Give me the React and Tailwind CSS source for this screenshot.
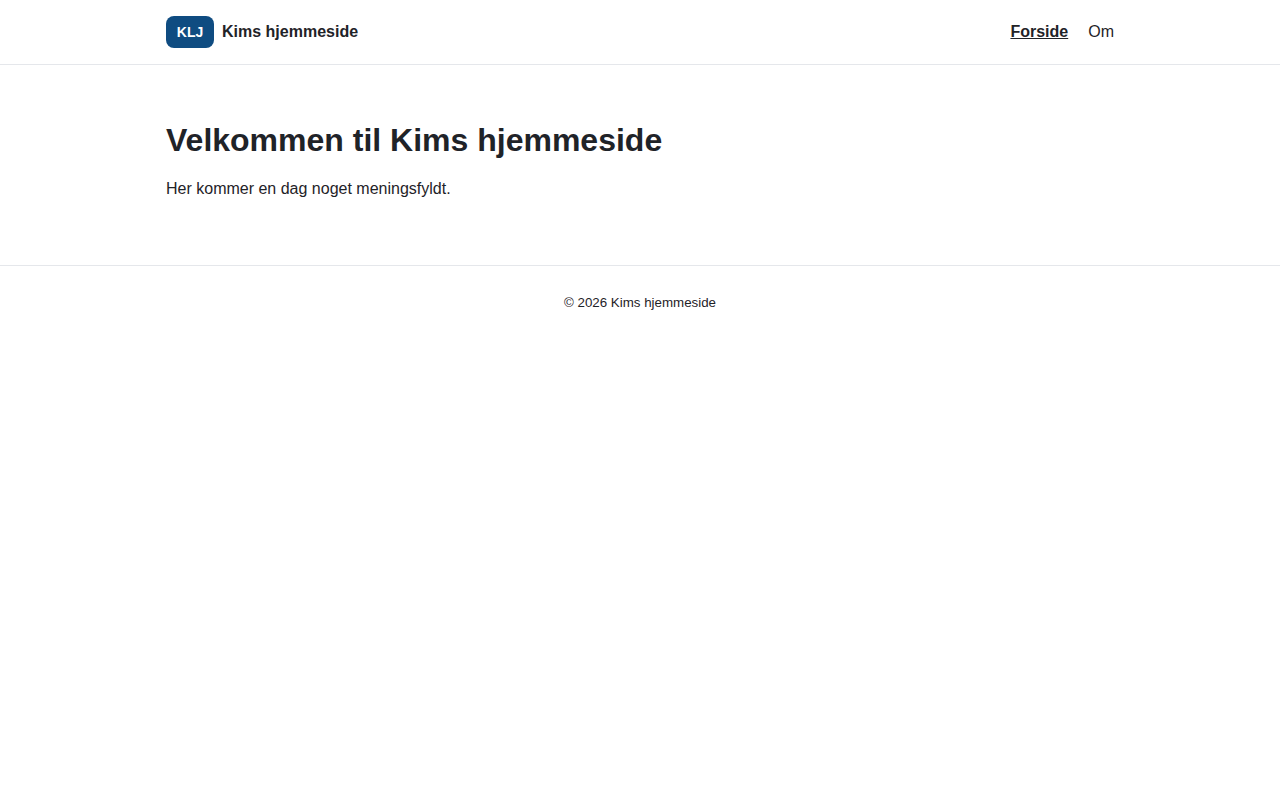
export default function App() {
  return (
    <div className="min-h-screen bg-white text-[#1f2328] font-['Liberation_Sans',Arial,sans-serif]">
      <header className="border-b border-[#e5e7eb]">
        <div className="max-w-[980px] mx-auto px-4 h-16 flex items-center justify-between">
          <div className="flex items-center gap-2">
            <div className="w-12 h-8 rounded-lg bg-[#0f4c81] text-white text-sm font-bold flex items-center justify-center">KLJ</div>
            <span className="font-bold">Kims hjemmeside</span>
          </div>
          <nav className="flex items-center gap-5">
            <a href="#" className="font-bold underline">Forside</a>
            <a href="#">Om</a>
          </nav>
        </div>
      </header>
      <main className="max-w-[980px] mx-auto px-4 pt-14 pb-16">
        <h1 className="text-[32px] leading-[1.2] font-bold m-0">Velkommen til Kims hjemmeside</h1>
        <p className="mt-[18px] leading-6">Her kommer en dag noget meningsfyldt.</p>
      </main>
      <footer className="border-t border-[#e5e7eb] pt-7 text-center text-[13.33px] leading-[18px]">
        © 2026 Kims hjemmeside
      </footer>
    </div>
  )
}
